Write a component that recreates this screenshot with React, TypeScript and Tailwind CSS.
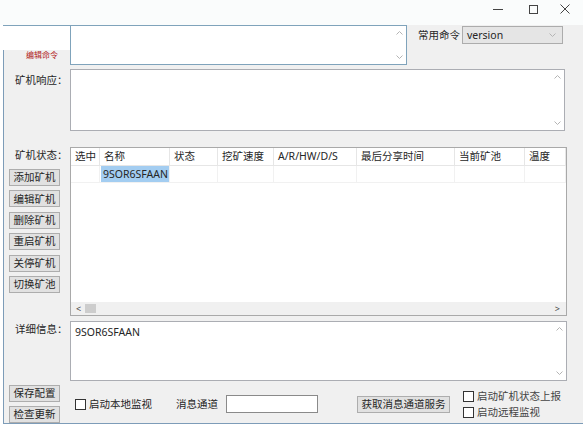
const font = "font-['Noto_Sans','Noto_Sans_CJK_SC',sans-serif]"

function Up() {
  return (
    <svg width="7" height="4" viewBox="0 0 7 4">
      <path d="M0.5 3.5 L3.5 0.5 L6.5 3.5" stroke="#b4b4b4" fill="none" />
    </svg>
  )
}

function Down() {
  return (
    <svg width="7" height="4" viewBox="0 0 7 4">
      <path d="M0.5 0.5 L3.5 3.5 L6.5 0.5" stroke="#b4b4b4" fill="none" />
    </svg>
  )
}

function Arrows() {
  return (
    <div className="w-[13px] shrink-0 flex flex-col items-center justify-between py-[5px]">
      <Up />
      <Down />
    </div>
  )
}

function Btn({ label }: { label: string }) {
  return (
    <div className="w-[51px] h-[17px] bg-[#e1e1e1] border border-[#adadad] flex items-center justify-center leading-none">
      {label}
    </div>
  )
}

function Check({ label }: { label: string }) {
  return (
    <div className="flex items-center leading-none">
      <div className="w-[11px] h-[11px] border border-[#333] bg-white" />
      <span className="ml-[3px]">{label}</span>
    </div>
  )
}

const cols = [
  { name: '选中', w: 'w-[29px]' },
  { name: '名称', w: 'w-[70px]' },
  { name: '状态', w: 'w-[48px]' },
  { name: '挖矿速度', w: 'w-[56px]' },
  { name: 'A/R/HW/D/S', w: 'w-[83px]' },
  { name: '最后分享时间', w: 'w-[98px]' },
  { name: '当前矿池', w: 'w-[70px]' },
  { name: '温度', w: 'w-[41px]' },
]

const actions = ['添加矿机', '编辑矿机', '删除矿机', '重启矿机', '关停矿机', '切换矿池']

export default function App() {
  return (
    <div className={`w-[583px] h-[427px] overflow-hidden bg-white text-[#262626] text-[10.5px] flex flex-col ${font}`}>
      {/* title bar */}
      <div className="h-[25px] shrink-0 bg-[#fafcfc] flex justify-end items-start">
        <div className="w-[10px] h-px bg-[#444] mt-[9px]" />
        <div className="w-[9px] h-[9px] border border-[#444] mt-[5px] ml-[26px]" />
        <svg width="10" height="10" viewBox="0 0 10 10" className="mt-[4px] ml-[22px] mr-[13px]">
          <path d="M0.5 0.5 L9.5 9.5 M9.5 0.5 L0.5 9.5" stroke="#444" strokeWidth="1" />
        </svg>
      </div>

      {/* window body */}
      <div className="ml-[3px] h-[399px] shrink-0 bg-[#f0f0f0] border-l border-b border-[#7d9cb8] flex flex-col">
        {/* command row */}
        <div className="h-[40px] flex shrink-0">
          <div className="-ml-px w-[67px] flex flex-col">
            <div className="h-[25px] bg-white border-t border-[#7fa3bb]" />
            <div className="h-[15px] border-l border-[#7d9cb8] pl-[22px] pt-[1px]">
              <div className="text-[8px] leading-none text-[#b02020]">编辑命令</div>
            </div>
          </div>
          <div className="w-[337px] h-[40px] bg-white border border-[#7fa3bb] flex justify-end">
            <Arrows />
          </div>
          <div className="ml-[11px] mt-px h-[18px] flex items-center">
            <span className="w-[44px] leading-none">常用命令</span>
            <div className="w-[101px] h-[18px] bg-[#e5e5e5] border border-[#acacac] flex items-center justify-between pl-[4px] pr-[6px] leading-none">
              <span>version</span>
              <Down />
            </div>
          </div>
        </div>

        {/* response */}
        <div className="mt-[4px] flex h-[62px] shrink-0">
          <div className="w-[66px] pl-[11px] pt-[6px] leading-none">矿机响应：</div>
          <div className="w-[495px] bg-white border border-[#abadb3] flex justify-end">
            <Arrows />
          </div>
        </div>

        {/* miner status */}
        <div className="mt-[16px] flex h-[169px] shrink-0">
          <div className="w-[66px] flex flex-col">
            <div className="h-[22px] pl-[11px] pt-[3px] leading-none">矿机状态：</div>
            <div className="pl-[5px] flex flex-col gap-[4.4px]">
              {actions.map((a) => (
                <Btn key={a} label={a} />
              ))}
            </div>
          </div>
          <div className="w-[497px] h-[169px] bg-white border border-[#a9a9a9] flex flex-col overflow-hidden">
            <div className="flex-1">
              <div className="flex h-[18px] border-b border-[#e6e6e6]">
                {cols.map((c) => (
                  <div key={c.name} className={`${c.w} shrink-0 border-r border-[#e6e6e6] pl-[4px] flex items-center whitespace-nowrap leading-none`}>
                    {c.name}
                  </div>
                ))}
              </div>
              <div className="flex h-[17px] border-b border-[#f1f1f1]">
                {cols.map((c, i) => (
                  <div key={c.name} className={`${c.w} shrink-0 border-r border-[#f1f1f1] flex items-stretch`}>
                    {i === 1 && (
                      <div className="ml-px w-[68px] bg-[#a3cdf1] pl-[2px] flex items-center leading-none">9SOR6SFAAN</div>
                    )}
                  </div>
                ))}
              </div>
            </div>
            <div className="h-[13px] bg-[#f0f0f0] flex items-center pl-[5px] pr-[6px] text-[9px] leading-none text-[#444]">
              <span>&lt;</span>
              <div className="ml-[4px] w-[11px] h-[9px] bg-[#cdcdcd]" />
              <span className="ml-auto">&gt;</span>
            </div>
          </div>
        </div>

        {/* details */}
        <div className="mt-[5px] flex h-[60px] shrink-0">
          <div className="w-[66px] pl-[11px] pt-[3px] leading-none">详细信息：</div>
          <div className="w-[497px] bg-white border border-[#abadb3] flex">
            <div className="flex-1 pl-[4px] pt-[5px] leading-none">9SOR6SFAAN</div>
            <Arrows />
          </div>
        </div>

        {/* bottom controls */}
        <div className="mt-[4px] flex h-[38px] shrink-0">
          <div className="w-[66px] pl-[5px] flex flex-col gap-[4px]">
            <Btn label="保存配置" />
            <Btn label="检查更新" />
          </div>
          <div className="flex items-center">
            <div className="w-[106px] pl-[5px]">
              <Check label="启动本地监视" />
            </div>
            <span className="w-[50px] leading-none">消息通道</span>
            <div className="w-[92px] h-[18px] bg-white border border-[#8a8a8a]" />
            <div className="ml-[39px] w-[93px] h-[17px] bg-[#e1e1e1] border border-[#adadad] flex items-center justify-center leading-none">
              获取消息通道服务
            </div>
            <div className="ml-[13px] flex flex-col gap-[5px] text-[#444]">
              <Check label="启动矿机状态上报" />
              <Check label="启动远程监视" />
            </div>
          </div>
        </div>
      </div>
    </div>
  )
}
